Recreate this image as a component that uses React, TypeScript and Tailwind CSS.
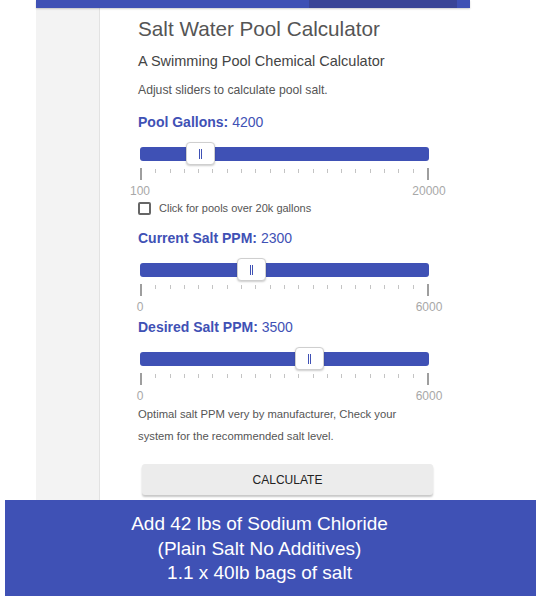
import { useState } from "react";

const TICKS = Array.from({ length: 21 }, (_, i) => i);
const TRACK_W = 289;

function Slider({
  label,
  value,
  min,
  max,
}: {
  label: string;
  value: number;
  min: number;
  max: number;
}) {
  const x = Math.round(((value - min) / (max - min)) * TRACK_W);
  return (
    <div>
      <div className="text-[14px] leading-[18px] text-[#3f51b5]">
        <span className="font-bold">{label}:</span> {value}
      </div>
      <div className="ml-[2px] w-[289px] mt-[11px]">
        <div className="relative h-[23px] flex items-center">
          <div className="w-full h-[14px] rounded-[3px] bg-[#3f51b5]" />
          <div
            className="absolute top-0 h-[23px] w-[29px] rounded-[4px] border border-[#cfcfcf] bg-white shadow-[0_1px_2px_rgba(0,0,0,0.2)] flex items-center justify-center"
            style={{ left: x - 14 }}
          >
            <div className="w-px h-[10px] bg-[#3f51b5]" />
            <div className="w-px h-[10px] ml-px bg-[#3f51b5]" />
          </div>
        </div>
        <div className="mt-[3px] h-[12px] flex justify-between">
          {TICKS.map((i) =>
            i === 0 || i === 20 ? (
              <div key={i} className="w-[2px] h-[12px] bg-[#9e9e9e]" />
            ) : (
              <div key={i} className="w-px h-[4px] mt-px bg-[#c4c4c4]" />
            ),
          )}
        </div>
        <div className="mt-[3px] h-[16px] flex justify-between text-[12px] leading-[16px] text-[#a8a8a8]">
          <div className="w-0 flex justify-center whitespace-nowrap">{min}</div>
          <div className="w-0 flex justify-center whitespace-nowrap">{max}</div>
        </div>
      </div>
    </div>
  );
}

export default function App() {
  const [big, setBig] = useState(false);

  return (
    <div className="w-[542px] h-[600px] bg-white flex flex-col [font-family:'Liberation_Sans',Arial,sans-serif]">
      <div className="relative z-10 flex ml-[36px] w-[434px] h-2 bg-[#3f51b5] shadow-[0_1px_2px_rgba(0,0,0,0.2)]">
        <div className="ml-[273px] w-[148px] bg-[#3a4597]" />
      </div>

      <div className="flex ml-[36px] w-[434px] h-[492px]">
        <div className="w-[64px] bg-[#f3f3f3] border-r border-[#e2e2e2]" />
        <div className="flex-1 pl-[38px] flex flex-col">
          <h1 className="mt-[9px] text-[20.7px] leading-[24px] text-[#555]">
            Salt Water Pool Calculator
          </h1>
          <p className="mt-[10px] text-[14.5px] leading-[20px] text-[#444]">
            A Swimming Pool Chemical Calculator
          </p>
          <p className="mt-[11px] text-[12.2px] leading-[16px] text-[#555]">
            Adjust sliders to calculate pool salt.
          </p>

          <div className="mt-[15px]">
            <Slider label="Pool Gallons" value={4200} min={100} max={20000} />
          </div>

          <label className="mt-[3px] h-[13px] flex items-center gap-2 text-[11px] text-[#555]">
            <input
              type="checkbox"
              checked={big}
              onChange={(e) => setBig(e.target.checked)}
              className="appearance-none w-[13px] h-[13px] rounded-[2px] border-2 border-[#666] bg-white"
            />
            Click for pools over 20k gallons
          </label>

          <div className="mt-[14px]">
            <Slider label="Current Salt PPM" value={2300} min={0} max={6000} />
          </div>
          <div className="mt-[3px]">
            <Slider label="Desired Salt PPM" value={3500} min={0} max={6000} />
          </div>

          <p className="w-[280px] text-[11.25px] leading-[21.5px] text-[#555]">
            Optimal salt PPM very by manufacturer, Check your system for the
            recommended salt level.
          </p>

          <button
            type="button"
            className="mt-[17px] ml-[4px] w-[291px] h-[31px] rounded-[3px] bg-[#ececec] text-[12px] text-[#222] shadow-[0_2px_2px_rgba(0,0,0,0.22)]"
          >
            CALCULATE
          </button>
        </div>
      </div>

      <div className="ml-[5px] w-[531px] h-[96px] bg-[#3f51b5] pt-[12px] pr-[22px] text-center text-[19px] leading-[24.5px] text-white">
        <div>Add 42 lbs of Sodium Chloride</div>
        <div>(Plain Salt No Additives)</div>
        <div>1.1 x 40lb bags of salt</div>
      </div>
    </div>
  );
}
